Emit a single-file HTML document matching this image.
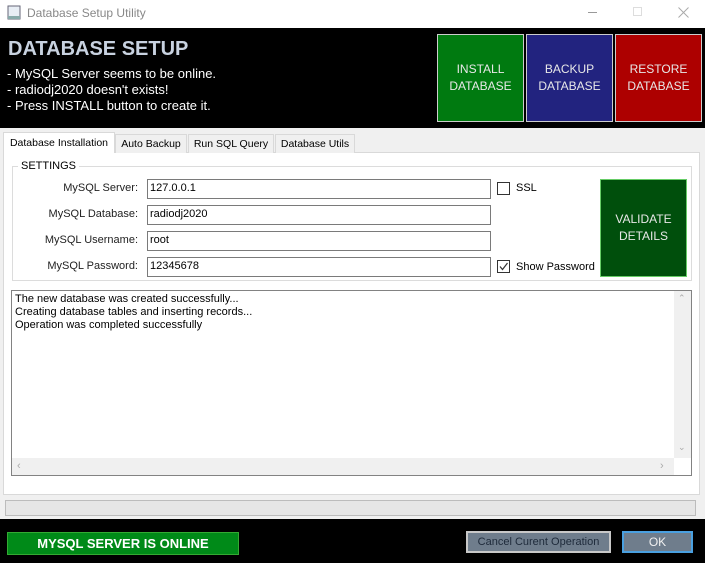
<!DOCTYPE html>
<html><head><style>
*{box-sizing:border-box;margin:0;padding:0}
body{width:705px;height:563px;position:relative;background:#f0f0f0;font-family:"Liberation Sans",sans-serif;font-size:11px;color:#000;overflow:hidden}
.a{position:absolute}
.tb{left:0;top:0;width:705px;height:28px;background:#fff}
.hd{left:0;top:28px;width:705px;height:100px;background:#000}
.bt{border:1px solid #ccc;color:#e8e8e8;font-size:12px;text-align:center;display:flex;align-items:center;justify-content:center;line-height:17px}
.in{background:#fff;border:1px solid #7a7a7a;height:20px;padding:2px 2px;font-size:11px}
.lb{text-align:right;width:110px;font-size:11px;color:#222}
.cb{width:13px;height:13px;border:1px solid #333;background:#fff}
.tab{top:134px;height:19px;border:1px solid #d9d9d9;border-bottom:none;background:#f0f0f0;padding:3px 0 0;font-size:10.5px;white-space:nowrap;text-align:center;overflow:hidden}
</style></head><body>
<div class="a tb"></div>
<svg class="a" style="left:7px;top:5px" width="14" height="16"><rect x="1" y="1" width="12" height="13" fill="#e8eef5" stroke="#667"/><rect x="1" y="11" width="12" height="3" fill="#8aa"/></svg>
<div class="a" style="left:27px;top:6px;color:#888;font-size:12px">Database Setup Utility</div>
<div class="a" style="left:588px;top:12px;width:9px;border-top:1px solid #999"></div>
<div class="a" style="left:633px;top:7px;width:9px;height:9px;border:1px solid #ddd"></div>
<svg class="a" style="left:678px;top:7px" width="11" height="11"><path d="M0.5 0.5 L10.5 10.5 M10.5 0.5 L0.5 10.5" stroke="#aaa" stroke-width="1"/></svg>
<div class="a hd"></div>
<div class="a" style="left:8px;top:38px;color:#c8d2e0;font-size:20px;font-weight:bold">DATABASE SETUP</div>
<div class="a" style="left:7px;top:66px;color:#fff;font-size:13px;line-height:16px">- MySQL Server seems to be online.<br>- radiodj2020 doesn't exists!<br>- Press INSTALL button to create it.</div>
<div class="a bt" style="left:437px;top:34px;width:87px;height:88px;background:#007a10">INSTALL<br>DATABASE</div>
<div class="a bt" style="left:526px;top:34px;width:87px;height:88px;background:#22237f">BACKUP<br>DATABASE</div>
<div class="a bt" style="left:615px;top:34px;width:87px;height:88px;background:#ad0000">RESTORE<br>DATABASE</div>
<div class="a" style="left:3px;top:152px;width:697px;height:343px;background:#fff;border:1px solid #d9d9d9"></div>
<div class="a tab" style="left:3px;top:132px;height:21px;background:#fff;width:112px;padding-top:4px">Database Installation</div>
<div class="a tab" style="left:115px;width:72px">Auto Backup</div>
<div class="a tab" style="left:188px;width:86px">Run SQL Query</div>
<div class="a tab" style="left:275px;width:80px">Database Utils</div>
<div class="a" style="left:12px;top:166px;width:680px;height:115px;border:1px solid #dcdcdc"></div>
<div class="a" style="left:18px;top:160px;background:#fff;padding:0 3px;font-size:11px">SETTINGS</div>
<div class="a lb" style="left:28px;top:182px">MySQL Server:</div>
<div class="a lb" style="left:28px;top:208px">MySQL Database:</div>
<div class="a lb" style="left:28px;top:234px">MySQL Username:</div>
<div class="a lb" style="left:28px;top:260px">MySQL Password:</div>
<div class="a in" style="left:147px;top:179px;width:344px">127.0.0.1</div>
<div class="a in" style="left:147px;top:205px;width:344px">radiodj2020</div>
<div class="a in" style="left:147px;top:231px;width:344px">root</div>
<div class="a in" style="left:147px;top:257px;width:344px">12345678</div>
<div class="a cb" style="left:497px;top:182px"></div>
<div class="a" style="left:516px;top:182px">SSL</div>
<div class="a cb" style="left:497px;top:260px"></div>
<svg class="a" style="left:497px;top:260px" width="13" height="13"><path d="M3 6.5 L5.5 9.5 L10.5 3" stroke="#333" fill="none" stroke-width="1.2"/></svg>
<div class="a" style="left:516px;top:261px">Show Password</div>
<div class="a bt" style="left:600px;top:179px;width:87px;height:98px;background:#004f0c;border-color:#6c6">VALIDATE<br>DETAILS</div>
<div class="a" style="left:11px;top:290px;width:681px;height:186px;border:1px solid #828282;background:#fff"></div>
<div class="a" style="left:15px;top:293px;line-height:13px;font-size:11px">The new database was created successfully...<br>Creating database tables and inserting records...<br>Operation was completed successfully</div>
<div class="a" style="left:674px;top:291px;width:17px;height:167px;background:#f0f0f0"></div>
<div class="a" style="left:12px;top:458px;width:662px;height:17px;background:#f0f0f0"></div>
<div class="a" style="left:678px;top:293px;color:#aaa;font-size:9px">⌃</div>
<div class="a" style="left:678px;top:442px;color:#aaa;font-size:9px">⌄</div>
<div class="a" style="left:17px;top:460px;color:#aaa;font-size:11px">‹</div>
<div class="a" style="left:660px;top:460px;color:#aaa;font-size:11px">›</div>
<div class="a" style="left:5px;top:500px;width:691px;height:16px;background:#e6e6e6;border:1px solid #bcbcbc"></div>
<div class="a" style="left:0;top:519px;width:705px;height:44px;background:#000"></div>
<div class="a" style="left:7px;top:532px;width:232px;height:23px;background:#008a18;border:1px solid #3a3;color:#fff;font-weight:bold;font-size:13px;text-align:center;line-height:21px">MYSQL SERVER IS ONLINE</div>
<div class="a" style="left:466px;top:531px;width:145px;height:22px;background:#6f7d8c;border:2px solid #c8c8c8;color:#1e2a3a;font-size:11px;text-align:center;line-height:18px">Cancel Curent Operation</div>
<div class="a" style="left:622px;top:531px;width:71px;height:22px;background:#6f7d8c;border:2px solid #4aa0e0;color:#f0f0f0;font-size:12px;text-align:center;line-height:18px">OK</div>
</body></html>
